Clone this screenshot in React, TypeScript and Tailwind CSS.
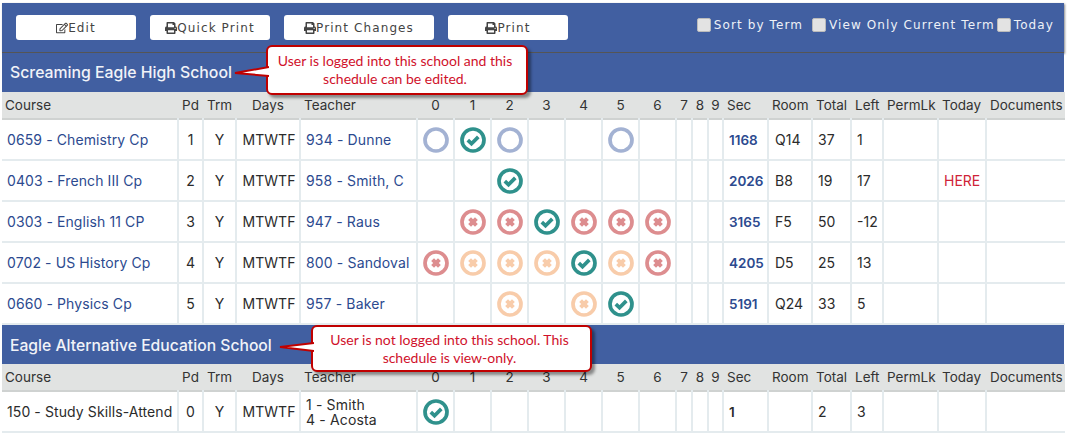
import { FaPrint, FaRegEdit } from "react-icons/fa";

type Mark = "o" | "c" | "r" | "p" | "";

type Course = {
  course: string;
  pd: string;
  days: string;
  teacher: string[];
  marks: Mark[];
  sec: string;
  room: string;
  total: string;
  left: string;
  today?: string;
};

const widths = [176, 25, 33, 64, 117, 37, 37, 37, 37, 37, 37, 37, 16, 16, 15, 45, 44, 39, 32, 55, 48, 79];
const heads = ["Course", "Pd", "Trm", "Days", "Teacher", "0", "1", "2", "3", "4", "5", "6", "7", "8", "9", "Sec", "Room", "Total", "Left", "PermLk", "Today", "Documents"];

const eagleRows: Course[] = [
  { course: "0659 - Chemistry Cp", pd: "1", days: "MTWTF", teacher: ["934 - Dunne"], marks: ["o", "c", "o", "", "", "o", ""], sec: "1168", room: "Q14", total: "37", left: "1" },
  { course: "0403 - French III Cp", pd: "2", days: "MTWTF", teacher: ["958 - Smith, C"], marks: ["", "", "c", "", "", "", ""], sec: "2026", room: "B8", total: "19", left: "17", today: "HERE" },
  { course: "0303 - English 11 CP", pd: "3", days: "MTWTF", teacher: ["947 - Raus"], marks: ["", "r", "r", "c", "r", "r", "r"], sec: "3165", room: "F5", total: "50", left: "-12" },
  { course: "0702 - US History Cp", pd: "4", days: "MTWTF", teacher: ["800 - Sandoval"], marks: ["r", "p", "p", "p", "c", "p", "r"], sec: "4205", room: "D5", total: "25", left: "13" },
  { course: "0660 - Physics Cp", pd: "5", days: "MTWTF", teacher: ["957 - Baker"], marks: ["", "", "p", "", "p", "c", ""], sec: "5191", room: "Q24", total: "33", left: "5" },
];

const altRows: Course[] = [
  { course: "150 - Study Skills-Attend", pd: "0", days: "MTWTF", teacher: ["1 - Smith", "4 - Acosta"], marks: ["c", "", "", "", "", "", ""], sec: "1", room: "", total: "2", left: "3" },
];

function StatusIcon({ mark }: { mark: Mark }) {
  if (!mark) return null;
  const color = { o: "#a3b2d3", c: "#2f918c", r: "#dd8d8f", p: "#f8ccaa" }[mark];
  return (
    <svg width="26" height="26" viewBox="0 0 26 26" className="mx-auto block">
      <circle cx="13" cy="13" r="11" fill="none" stroke={color} strokeWidth="3.7" />
      {mark === "c" && <path d="M7.8 13.2l3.7 3.5 6.8-6.8" fill="none" stroke={color} strokeWidth="3.7" />}
      {(mark === "r" || mark === "p") && <path d="M9.6 9.6l6.8 6.8M16.4 9.6l-6.8 6.8" fill="none" stroke={color} strokeWidth="4" />}
    </svg>
  );
}

function ToolButton({ label, icon, width }: { label: string; icon: "edit" | "print"; width: string }) {
  return (
    <button className={`flex h-[25px] items-center justify-center rounded-[3px] bg-white pt-[1px] font-['DejaVu_Sans',sans-serif] text-[12px] tracking-[1.1px] text-[#444] ${width}`}>
      {icon === "edit" ? <FaRegEdit className="text-[12px]" /> : <FaPrint className="text-[12px]" />}
      {label}
    </button>
  );
}

function TermCheck({ label, className }: { label: string; className?: string }) {
  return (
    <label className={`flex items-center gap-[3px] font-['DejaVu_Sans',sans-serif] text-[12px] leading-[14px] tracking-[1.1px] text-[#eef1f7] ${className ?? ""}`}>
      <span className="h-[14px] w-[14px] rounded-[2px] border border-[#bbb] bg-[#e3e3e3]" />
      {label}
    </label>
  );
}

function Callout({ lines, className, tailClass, tail }: { lines: string[]; className: string; tailClass: string; tail: string }) {
  return (
    <div className={`absolute z-10 flex flex-col items-center justify-center rounded-[6px] border-2 border-[#c00000] bg-white pr-[4px] font-['Lato',sans-serif] text-[14px] text-[#d0112b] shadow-[3px_3px_3px_rgba(0,0,0,0.4)] ${className}`}>
      <svg width="36" height="14" viewBox="0 0 36 14" className={`absolute left-[-35px] ${tailClass}`}>
        <path d={tail} fill="white" stroke="#c00000" strokeWidth="2" />
      </svg>
      {lines.map((line) => (
        <span key={line}>{line}</span>
      ))}
    </div>
  );
}

function SchoolBlock({ rows, link }: { rows: Course[]; link: boolean }) {
  return (
    <table className="w-[1062px] table-fixed border-collapse text-[14px] text-[#2b2b2b]">
      <colgroup>
        {widths.map((w, i) => (
          <col key={i} style={{ width: w }} />
        ))}
      </colgroup>
      <thead>
        <tr className="h-[27px] border-b-2 border-[#cfd2d1] bg-[#e1e3e2] text-[13.5px] font-normal text-[#333]">
          {heads.map((h, i) => (
            <th key={h} className={`overflow-visible whitespace-nowrap px-0 font-normal ${i === 0 ? "pl-[3px] text-left" : i === 4 || i >= 15 ? "pl-[4px] text-left" : "text-center"}`}>
              {h}
            </th>
          ))}
        </tr>
      </thead>
      <tbody>
        {rows.map((r) => (
          <tr key={r.course} className="h-[41px] border-b-2 border-[#e4ebee]">
            <td className={`whitespace-nowrap border-r-2 border-[#e4ebee] pl-[5px] tracking-[0.1px] ${link ? "text-[#2c4a8f]" : ""}`}>{r.course}</td>
            <td className="border-r-2 border-[#e4ebee] text-center">{r.pd}</td>
            <td className="border-r-2 border-[#e4ebee] text-center">Y</td>
            <td className="border-r-2 border-[#e4ebee] pl-[2px] text-center">{r.days}</td>
            <td className={`whitespace-nowrap border-r-2 border-[#e4ebee] pl-[5px] leading-[15px] tracking-[0.15px] ${link ? "text-[#2c4a8f]" : ""}`}>
              {r.teacher.map((t) => (
                <div key={t}>{t}</div>
              ))}
            </td>
            {r.marks.map((m, i) => (
              <td key={i} className="border-r-2 border-[#e4ebee]">
                <StatusIcon mark={m} />
              </td>
            ))}
            <td className="border-r-2 border-[#e4ebee]" />
            <td className="border-r-2 border-[#e4ebee]" />
            <td className="border-r-2 border-[#e4ebee]" />
            <td className={`border-r-2 border-[#e4ebee] pl-[5px] pt-[1px] text-[13.5px] font-semibold ${link ? "text-[#2c4a8f]" : ""}`}>{r.sec}</td>
            <td className="border-r-2 border-[#e4ebee] pl-[6px]">{r.room}</td>
            <td className="border-r-2 border-[#e4ebee] pl-[5px]">{r.total}</td>
            <td className="border-r-2 border-[#e4ebee] pl-[5px]">{r.left}</td>
            <td className="border-r-2 border-[#e4ebee]" />
            <td className="border-r-2 border-[#e4ebee] pl-[5px] text-[#cf2338]">{r.today}</td>
            <td />
          </tr>
        ))}
      </tbody>
    </table>
  );
}

export default function App() {
  return (
    <main className="min-h-[435px] w-[1069px] overflow-hidden bg-white pl-[2px] pt-[3px] font-['Inter',sans-serif]">
      <header className="flex h-[50px] w-[1062px] items-start justify-between border-b border-[#555] bg-[#415fa1] pl-[14px] pr-[10px] pt-[12px] shadow-[1px_1px_2px_rgba(0,0,0,0.45)]">
        <div className="flex gap-[14px]">
          <ToolButton label="Edit" icon="edit" width="w-[120px]" />
          <ToolButton label="Quick Print" icon="print" width="w-[120px]" />
          <ToolButton label="Print Changes" icon="print" width="w-[150px]" />
          <ToolButton label="Print" icon="print" width="w-[120px]" />
        </div>
        <div className="flex gap-[3px] pt-[3px]">
          <TermCheck label="Sort by Term" className="mr-[6px]" />
          <TermCheck label="View Only Current Term" className="mr-[-1px]" />
          <TermCheck label="Today" />
        </div>
      </header>

      <section className="relative">
        <h2 className="flex h-[39px] w-[1062px] items-center bg-[#415fa1] pl-[8px] text-[15.8px] font-medium text-[#f1f3f8]">Screaming Eagle High School</h2>
        <Callout
          lines={["User is logged into this school and this", "schedule can be edited."]}
          className="left-[264px] top-[-8px] h-[50px] w-[262px] leading-[18.5px]"
          tailClass="top-[18px]"
          tail="M36 2 L2 8 L36 11"
        />
        <SchoolBlock rows={eagleRows} link />
      </section>

      <section className="relative">
        <h2 className="flex h-[39px] w-[1062px] items-center bg-[#415fa1] pl-[8px] pt-[2px] text-[15.7px] font-medium text-[#f1f3f8]">Eagle Alternative Education School</h2>
        <Callout
          lines={["User is not logged into this school. This", "schedule is view-only."]}
          className="left-[309px] top-0 h-[47px] w-[281px] leading-[18px]"
          tailClass="top-[14px]"
          tail="M36 2 L2 6 L36 10"
        />
        <SchoolBlock rows={altRows} link={false} />
      </section>
    </main>
  );
}
